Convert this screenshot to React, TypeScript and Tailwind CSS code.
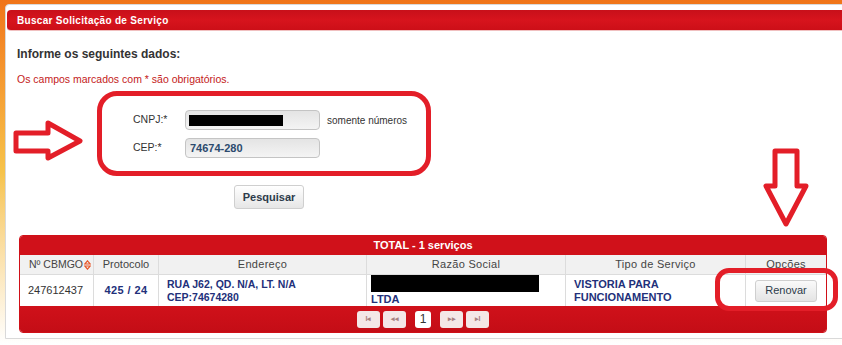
import React from 'react'

const font = { fontFamily: '"Liberation Sans", Arial, sans-serif' }

function SortIcon() {
  return (
    <svg width="7" height="10" viewBox="0 0 7 10" className="inline-block ml-[1px] shrink-0">
      <path d="M3.5 0.8 L6.2 4 L0.8 4 Z" fill="none" stroke="#e8572a" strokeWidth="1.2" />
      <path d="M3.5 9.2 L6.2 6 L0.8 6 Z" fill="none" stroke="#e8572a" strokeWidth="1.2" />
    </svg>
  )
}

function PagerButton({ label, wide = true }: { label: string; wide?: boolean }) {
  return (
    <div
      className={`${wide ? 'w-[23px]' : 'w-[16px]'} h-[17px] rounded-[3px] flex items-center justify-center ${
        wide ? 'bg-[#f4e7e7] text-[#a88080] text-[7px] font-bold' : 'bg-white text-[#333] text-[12px]'
      }`}
    >
      {label}
    </div>
  )
}

export default function App() {
  return (
    <div
      className="relative w-[842px] h-[345px] overflow-hidden bg-gradient-to-b from-[#f07418] via-[#f6c34a] to-white pt-[4px] pl-[5px]"
      style={font}
    >
      {/* Painel */}
      <div className="w-[900px] h-[335px] bg-white border border-[#d9d9d9] rounded-tl-[4px] pl-[1px] pt-[5px]">
        <div className="h-[21px] rounded-[4px] bg-gradient-to-b from-[#c8101a] via-[#d7141d] to-[#cc0f18] border-b border-[#f0c0c0] flex items-center pl-[10px]">
          <span className="text-white text-[10px] font-bold tracking-[0.3px]">Buscar Solicitação de Serviço</span>
        </div>

        <div className="pl-[10px]">
          <div className="mt-[15px] text-[12px] leading-[16px] font-bold text-[#333]">Informe os seguintes dados:</div>
          <div className="mt-[10px] text-[10.5px] leading-[14px] text-[#c41a1a]">Os campos marcados com * são obrigatórios.</div>

          {/* Formulário */}
          <div className="mt-[24px] ml-[116px] flex flex-col gap-[8px]">
            <div className="flex items-center h-[20px]">
              <span className="w-[52px] text-[10.5px] text-[#333]">CNPJ:*</span>
              <div className="w-[135px] h-[20px] rounded-[4px] border border-[#c4c4c4] bg-gradient-to-b from-[#e4e4e4] to-[#f4f4f4] flex items-center pl-[3px]">
                <div className="w-[94px] h-[11px] bg-black" />
              </div>
              <span className="ml-[7px] text-[10px] text-[#333]">somente números</span>
            </div>
            <div className="flex items-center h-[20px]">
              <span className="w-[52px] text-[10.5px] text-[#333]">CEP:*</span>
              <div className="w-[135px] h-[20px] rounded-[4px] border border-[#c4c4c4] bg-gradient-to-b from-[#e4e4e4] to-[#f4f4f4] flex items-center pl-[4px]">
                <span className="text-[11px] font-bold text-[#2c4a6e]">74674-280</span>
              </div>
            </div>
          </div>

          <div className="mt-[27px] ml-[217px]">
            <div className="w-[70px] h-[24px] rounded-[3px] border border-[#cfcfcf] bg-gradient-to-b from-white to-[#e6e6e6] flex items-center justify-center text-[11px] font-bold text-[#2d3b4a]">
              Pesquisar
            </div>
          </div>
        </div>

        {/* Tabela */}
        <div className="mt-[26px] ml-[12px] w-[808px] rounded-[4px] border border-[#d01018] overflow-hidden">
          <div className="h-[19px] bg-[#d0111a] flex items-center justify-center text-white text-[11px] font-bold">
            TOTAL - 1 serviços
          </div>
          <div className="grid grid-cols-[74px_65px_208px_199px_180px_1fr] text-[11px]">
            <div className="h-[19px] bg-[#f1f1f1] border-r border-[#dcdcdc] flex items-center pl-[9px] text-[#444] whitespace-nowrap text-[10.5px]">
              Nº CBMGO<SortIcon />
            </div>
            <div className="h-[19px] bg-[#f1f1f1] border-r border-[#dcdcdc] flex items-center justify-center text-[#444]">Protocolo</div>
            <div className="h-[19px] bg-[#f1f1f1] border-r border-[#dcdcdc] flex items-center justify-center text-[#444] tracking-[0.3px]">Endereço</div>
            <div className="h-[19px] bg-[#f1f1f1] border-r border-[#dcdcdc] flex items-center justify-center text-[#444] tracking-[0.3px]">Razão Social</div>
            <div className="h-[19px] bg-[#f1f1f1] border-r border-[#dcdcdc] flex items-center justify-center text-[#444] tracking-[0.3px]">Tipo de Serviço</div>
            <div className="h-[19px] bg-[#f1f1f1] flex items-center justify-center text-[#444] tracking-[0.3px]">Opções</div>

            <div className="h-[32px] border-t border-r border-[#dcdcdc] flex items-center pl-[8px] text-[#333]">247612437</div>
            <div className="h-[32px] border-t border-r border-[#dcdcdc] flex items-center justify-center font-bold text-[#22307a] tracking-[0.4px]">425 / 24</div>
            <div className="h-[32px] border-t border-r border-[#dcdcdc] flex flex-col justify-center pl-[8px] font-bold text-[#22307a] leading-[13px] text-[10.5px]">
              <span>RUA J62, QD. N/A, LT. N/A</span>
              <span>CEP:74674280</span>
            </div>
            <div className="h-[32px] border-t border-r border-[#dcdcdc] flex flex-col pl-[4px] font-bold text-[#22307a] leading-[13px]">
              <div className="w-[168px] h-[17px] bg-black" />
              <span className="mt-[1px]">LTDA</span>
            </div>
            <div className="h-[32px] border-t border-r border-[#dcdcdc] flex flex-col justify-center pl-[8px] font-bold text-[#22307a] leading-[13px]">
              <span>VISTORIA PARA</span>
              <span>FUNCIONAMENTO</span>
            </div>
            <div className="h-[32px] border-t border-[#dcdcdc] flex items-center justify-center">
              <div className="w-[62px] h-[22px] rounded-[3px] border border-[#cfcfcf] bg-gradient-to-b from-[#fafafa] to-[#e4e4e4] flex items-center justify-center text-[11px] text-[#2d3b4a]">
                Renovar
              </div>
            </div>
          </div>
          <div className="h-[26px] bg-gradient-to-b from-[#d0111a] to-[#c40d16] flex items-center justify-center gap-[3px]">
            <PagerButton label="I◂" />
            <PagerButton label="◂◂" />
            <div className="mx-[6px]"><PagerButton label="1" wide={false} /></div>
            <PagerButton label="▸▸" />
            <PagerButton label="▸I" />
          </div>
        </div>
      </div>

      {/* Marcações vermelhas */}
      <div className="absolute left-[97px] top-[91px] w-[334px] h-[85px] rounded-[20px] border-[5px] border-[#e31e28]" />
      <div className="absolute left-[715px] top-[268px] w-[123px] h-[43px] rounded-[14px] border-[5px] border-[#e31e28]" />
      <svg className="absolute left-0 top-0" width="842" height="345">
        <polygon
          points="16,133 48,133 48,123 80,141 48,158 48,151 16,151"
          fill="white"
          stroke="#e31e28"
          strokeWidth="5"
          strokeLinejoin="round"
        />
        <polygon
          points="775,151 797,151 797,186 806,186 786,224 766,186 775,186"
          fill="white"
          stroke="#e31e28"
          strokeWidth="5"
          strokeLinejoin="round"
        />
      </svg>
    </div>
  )
}
